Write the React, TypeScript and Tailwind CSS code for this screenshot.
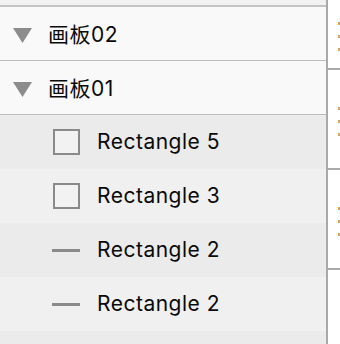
import React from "react";

type Layer = { name: string; kind: "rect" | "line" };

const layers: Layer[] = [
  { name: "Rectangle 5", kind: "rect" },
  { name: "Rectangle 3", kind: "rect" },
  { name: "Rectangle 2", kind: "line" },
  { name: "Rectangle 2", kind: "line" },
];

function Caret() {
  return (
    <svg width="19" height="15" viewBox="0 0 19 15" className="shrink-0">
      <polygon points="0,0 19,0 9.5,15" fill="#8c8c8c" />
    </svg>
  );
}

function ArtboardRow({ name }: { name: string }) {
  return (
    <div className="flex h-[54px] items-center gap-[16px] border-b border-[#bdbdbd] bg-[#f9f9f9] pl-[13px] pt-[3px]">
      <Caret />
      <span className="text-[21px] tracking-[0.5px] text-[#0a0a0a]">{name}</span>
    </div>
  );
}

function LayerRow({ layer, index }: { layer: Layer; index: number }) {
  return (
    <div
      className={`flex h-[54px] items-center gap-[17px] pl-[52px] ${
        index % 2 === 0 ? "bg-[#ebebeb]" : "bg-[#f0f0f0]"
      }`}
    >
      <div className="flex w-[28px] items-center justify-center">
        {layer.kind === "rect" ? (
          <div className="h-[26px] w-[27px] border-2 border-[#8a8a8a] bg-[#f2f2f2]" />
        ) : (
          <div className="h-[3px] w-[28px] bg-[#8a8a8a]" />
        )}
      </div>
      <span className="text-[21px] tracking-[0.5px] text-[#0a0a0a]">{layer.name}</span>
    </div>
  );
}

function Dots() {
  return (
    <div className="flex flex-col items-end gap-[10px]">
      <div className="h-[3px] w-[2px] bg-[#e0a050]" />
      <div className="h-[3px] w-[2px] bg-[#e0a050]" />
      <div className="h-[3px] w-[2px] bg-[#e0a050]" />
    </div>
  );
}

export default function App() {
  return (
    <div
      className="flex h-[344px] w-[340px] overflow-hidden bg-white"
      style={{ fontFamily: '"Inter", "Noto Sans CJK SC", sans-serif' }}
    >
      <div className="flex w-[328px] shrink-0 flex-col border-r-2 border-[#a9a9a9] bg-[#ebebeb]">
        <div className="h-[7px] shrink-0 border-b-2 border-[#c4c4c4] bg-[#f2f2f2]" />
        <ArtboardRow name="画板02" />
        <ArtboardRow name="画板01" />
        {layers.map((l, i) => (
          <LayerRow key={i} layer={l} index={i} />
        ))}
      </div>
      <div className="flex flex-1 flex-col">
        <div className="flex h-[70px] items-center justify-end border-b-2 border-[#a9a9a9] pt-[5px]">
          <Dots />
        </div>
        <div className="flex h-[100px] items-center justify-end border-b-2 border-[#a9a9a9] pt-[5px]">
          <Dots />
        </div>
        <div className="flex h-[100px] items-center justify-end border-b-2 border-[#a9a9a9] pt-[5px]">
          <Dots />
        </div>
      </div>
    </div>
  );
}
